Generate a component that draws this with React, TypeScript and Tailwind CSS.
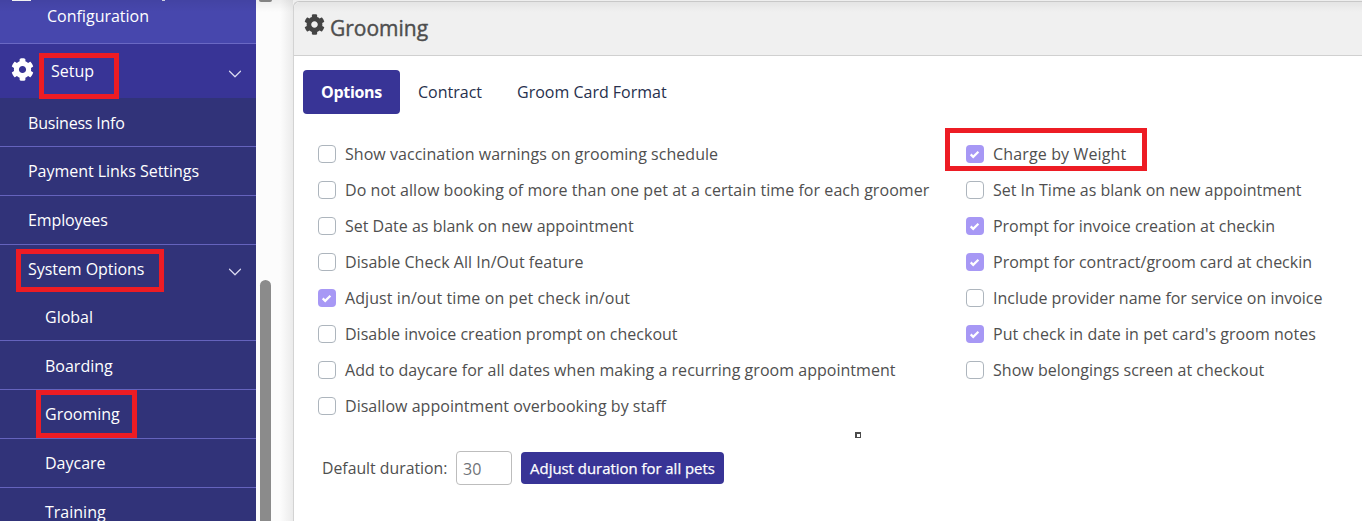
import { ChevronDown } from "lucide-react";
import { FaCog } from "react-icons/fa";

type Option = { label: string; checked?: boolean; spacing?: string };

const leftOptions: Option[] = [
  { label: "Show vaccination warnings on grooming schedule", spacing: "tracking-[0.04px]" },
  { label: "Do not allow booking of more than one pet at a certain time for each groomer", spacing: "tracking-[0.055px]" },
  { label: "Set Date as blank on new appointment" },
  { label: "Disable Check All In/Out feature", spacing: "tracking-[0.04px]" },
  { label: "Adjust in/out time on pet check in/out", checked: true, spacing: "tracking-[0.09px]" },
  { label: "Disable invoice creation prompt on checkout" },
  { label: "Add to daycare for all dates when making a recurring groom appointment", spacing: "tracking-[0.03px]" },
  { label: "Disallow appointment overbooking by staff", spacing: "tracking-[0.03px]" },
];

const rightOptions: Option[] = [
  { label: "Charge by Weight", checked: true, spacing: "tracking-[0.14px]" },
  { label: "Set In Time as blank on new appointment" },
  { label: "Prompt for invoice creation at checkin", checked: true, spacing: "tracking-[-0.02px]" },
  { label: "Prompt for contract/groom card at checkin", checked: true },
  { label: "Include provider name for service on invoice", spacing: "tracking-[-0.02px]" },
  { label: "Put check in date in pet card's groom notes", checked: true, spacing: "tracking-[0.03px]" },
  { label: "Show belongings screen at checkout", spacing: "tracking-[0.03px]" },
];

const setupItems = [
  { label: "Business Info", className: "pt-px tracking-[-0.2px]" },
  { label: "Payment Links Settings", className: "tracking-[-0.03px]" },
  { label: "Employees", className: "tracking-[-0.12px]" },
];

const systemItems = [
  { label: "Global", className: "pt-0.5" },
  { label: "Boarding", className: "pt-px" },
  { label: "Grooming", className: "" },
  { label: "Daycare", className: "" },
  { label: "Training", className: "" },
];

export default function App() {
  return (
    <div className="relative flex h-[521px] w-[1362px] overflow-hidden bg-[#fcfcfc] font-['Open_Sans','Noto_Sans',sans-serif] text-base text-[#4f4f4f]">
      <Sidebar />
      <Scrollbar />
      <div className="w-[21px] shrink-0 bg-linear-to-r from-[#fcfcfc] from-40% to-[#ebebeb]" />
      <main className="flex min-w-0 flex-1 flex-col pt-px">
        <div className="-mr-2 flex flex-1 flex-col rounded-tl-md border-t border-l border-[#d3d3d3] bg-white">
          <header className="flex h-[54px] shrink-0 items-center rounded-tl-md border-b border-[#d0d0d0] bg-[#f0f0f0] pl-[10px]">
            <FaCog className="mb-[8px] size-[21px] text-[#444]" />
            <h1 className="ml-[5px] text-[21px] [-webkit-text-stroke:0.4px_#4b4b4b]">Grooming</h1>
          </header>
          <Tabs />
          <div className="mt-[22px] grid grid-cols-[648px_1fr] pl-6">
            <OptionList options={leftOptions} />
            <OptionList options={rightOptions} />
          </div>
          <div className="mt-[27px] flex h-[34px] items-center pl-[27px]">
            <label className="w-[135px] pt-0.5 pl-px text-[15.8px]">Default duration:</label>
            <input
              className="h-[34px] w-14 rounded border border-[#bdbdbd] bg-white px-1.5 pt-0.5 text-[#6f7378]"
              defaultValue="30"
            />
            <button className="ml-[9px] h-8 w-[203px] rounded bg-[#383496] text-[14.9px] whitespace-nowrap text-white [-webkit-text-stroke:0.25px_white]">
              Adjust duration for all pets
            </button>
          </div>
        </div>
      </main>

      {/* page shadow cast by the top bar */}
      <div className="absolute inset-x-0 top-0 h-3 bg-linear-to-b from-black/6 to-transparent" />

      {/* highlight boxes */}
      <div className="absolute top-[53px] left-[39px] h-[46px] w-20 border-5 border-[#ed1c24]" />
      <div className="absolute top-[249px] left-4 h-[43px] w-[148px] border-5 border-[#ed1c24]" />
      <div className="absolute top-[390px] left-9 h-12 w-[101px] border-5 border-[#ed1c24]" />
      <div className="absolute top-[128px] left-[945px] h-[43px] w-[202px] border-5 border-[#ed1c24]" />
      <div className="absolute top-[432px] left-[855px] size-1.5 border-t-2 border-r-1 border-b-1 border-l-2 border-[#4b4b4b] bg-white" />
    </div>
  );
}

function Sidebar() {
  return (
    <nav className="flex w-64 shrink-0 flex-col overflow-hidden bg-[#313379] text-white">
      <div className="relative h-11 shrink-0 border-b border-[#6a68c4] bg-[#4747ad] pl-[47px] leading-8">
        <span className="absolute top-0 left-3 h-px w-[19px] bg-white" />
        <span className="absolute top-0 left-[162px] h-px w-[3px] bg-white/80" />
        Configuration
      </div>
      <div className="flex h-[54px] shrink-0 items-center bg-[#383496] pr-[10px] pl-[11px]">
        <FaCog className="mb-[3px] size-[23px]" />
        <span className="ml-[17px] flex-1">Setup</span>
        <ChevronDown className="mt-[5px] size-[22px] text-[#dcdcf2]" strokeWidth={1.3} />
      </div>
      {setupItems.map((item) => (
        <div key={item.label} className="flex h-[49px] shrink-0 items-center border-b border-[#6563bd] pl-7">
          <span className={item.className}>{item.label}</span>
        </div>
      ))}
      <div className="flex h-[47px] shrink-0 items-center pt-px pr-[10px] pl-7">
        <span className="flex-1 tracking-[-0.05px]">System Options</span>
        <ChevronDown className="mt-[5px] size-[22px] text-[#dcdcf2]" strokeWidth={1.3} />
      </div>
      {systemItems.map((item) => (
        <div key={item.label} className="flex h-[49px] shrink-0 items-center border-b border-[#6563bd] pl-[45px]">
          <span className={item.className}>{item.label}</span>
        </div>
      ))}
    </nav>
  );
}

function Scrollbar() {
  return (
    <div className="flex w-4 shrink-0 flex-col items-end justify-between pr-px">
      <div className="-mr-px h-0.5 w-[13px] rounded-b-xs bg-[#8b8b8b]" />
      <div className="h-[241px] w-[11px] rounded-t-full bg-[#8b8b8b]" />
    </div>
  );
}

function Tabs() {
  return (
    <div className="mt-[14px] flex h-11 items-center pl-[9px] text-[#27304d]">
      <div className="flex h-11 w-[97px] items-center justify-center rounded bg-[#383496] font-bold tracking-[-0.3px] text-white">
        Options
      </div>
      <div className="ml-[18px]">Contract</div>
      <div className="ml-[35px]">Groom Card Format</div>
    </div>
  );
}

function OptionList({ options }: { options: Option[] }) {
  return (
    <div className="h-[288px]">
      {options.map((option) => (
        <label key={option.label} className="flex h-9 items-center whitespace-nowrap">
          <Checkbox checked={option.checked} />
          <span className={`ml-[9px] ${option.spacing ?? ""}`}>{option.label}</span>
        </label>
      ))}
    </div>
  );
}

function Checkbox({ checked }: { checked?: boolean }) {
  if (!checked) {
    return <span className="size-[18px] rounded border border-[#adb5bd] bg-white" />;
  }
  return (
    <span className="flex size-[18px] items-center justify-center rounded bg-[#a798f5]">
      <svg viewBox="0 0 18 18" className="size-[18px]" fill="none" stroke="white" strokeWidth="2.2">
        <path d="M4.7 9.4l2.5 2.5 5.2-5.2" />
      </svg>
    </span>
  );
}
